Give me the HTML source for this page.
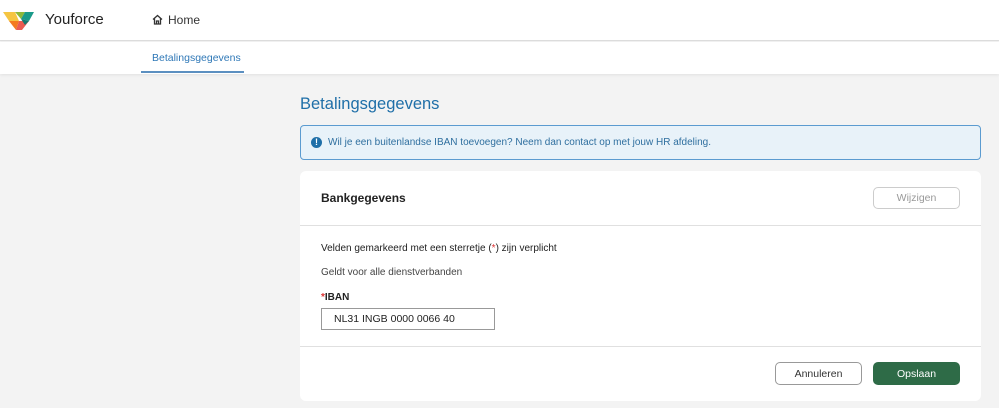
<!DOCTYPE html>
<html><head><meta charset="utf-8"><style>
*{box-sizing:border-box;margin:0;padding:0}
body{width:999px;height:408px;background:#f3f3f3;font-family:"Liberation Sans",sans-serif;position:relative;overflow:hidden;color:#222}
.abs{position:absolute}
</style></head><body>
<div class="abs" style="left:0;top:0;width:999px;height:41px;background:#fff;border-bottom:1px solid #ddd"></div>
<svg class="abs" style="left:3px;top:9px" width="32" height="24" viewBox="0 0 32 24">
<polygon points="0,3 12,3 16,12 6,12" fill="#f5c542"/>
<polygon points="12,3 22,3 18,10" fill="#8db83a"/>
<polygon points="22,3 31,3 26,12 18,10" fill="#1a9a8a"/>
<polygon points="6,12 16,12 13,21" fill="#f47a20"/>
<polygon points="16,12 26,12 19,21 13,21" fill="#ea5b52"/>
<polygon points="18,10 26,12 22,16" fill="#137a70"/>
</svg>
<div class="abs" style="left:45px;top:11px;font-size:15px;color:#222">Youforce</div>
<svg class="abs" style="left:152px;top:14px" width="11" height="11" viewBox="0 0 11 11"><path d="M1 5.5L5.5 1.5L10 5.5M2.5 4.5V10H8.5V4.5M4.5 10V7H6.5V10" fill="none" stroke="#333" stroke-width="1.3"/></svg>
<div class="abs" style="left:168px;top:13px;font-size:12px;color:#333">Home</div>
<div class="abs" style="left:0;top:42px;width:999px;height:32px;background:#fff;box-shadow:0 1px 3px rgba(0,0,0,.08)"></div>
<div class="abs" style="left:152px;top:52px;font-size:10.5px;color:#2f78b7">Betalingsgegevens</div>
<div class="abs" style="left:141px;top:71px;width:103px;height:2px;background:#5b8fc0"></div>
<div class="abs" style="left:300px;top:95px;font-size:16.5px;color:#1f6fa8">Betalingsgegevens</div>
<div class="abs" style="left:300px;top:125px;width:681px;height:35px;background:#e8f2f9;border:1px solid #5b9bd0;border-radius:4px"></div>
<div class="abs" style="left:311px;top:137px;width:11px;height:11px;border-radius:50%;background:#1f6fa8;color:#fff;font-size:9px;font-weight:bold;text-align:center;line-height:11px">!</div>
<div class="abs" style="left:328px;top:137px;font-size:10px;color:#2f6f9f">Wil je een buitenlandse IBAN toevoegen? Neem dan contact op met jouw HR afdeling.</div>
<div class="abs" style="left:300px;top:171px;width:681px;height:230px;background:#fff;border-radius:6px"></div>
<div class="abs" style="left:321px;top:191px;font-size:12px;font-weight:bold;color:#222">Bankgegevens</div>
<div class="abs" style="left:873px;top:187px;width:87px;height:22px;border:1px solid #ccc;border-radius:5px;font-size:10.5px;color:#999;text-align:center;line-height:21px">Wijzigen</div>
<div class="abs" style="left:300px;top:225px;width:681px;height:1px;background:#e0e0e0"></div>
<div class="abs" style="left:321px;top:243px;font-size:10px;color:#222">Velden gemarkeerd met een sterretje (<span style="color:#d33">*</span>) zijn verplicht</div>
<div class="abs" style="left:321px;top:267px;font-size:10px;color:#444">Geldt voor alle dienstverbanden</div>
<div class="abs" style="left:321px;top:292px;font-size:10px;font-weight:bold;color:#222"><span style="color:#d33">*</span>IBAN</div>
<div class="abs" style="left:321px;top:308px;width:174px;height:22px;border:1px solid #999;font-size:10.5px;color:#222;padding-left:12px;line-height:21px">NL31 INGB 0000 0066 40</div>
<div class="abs" style="left:300px;top:346px;width:681px;height:1px;background:#e0e0e0"></div>
<div class="abs" style="left:775px;top:362px;width:87px;height:23px;border:1px solid #999;border-radius:5px;font-size:10.5px;color:#333;text-align:center;line-height:22px;background:#fff">Annuleren</div>
<div class="abs" style="left:873px;top:362px;width:87px;height:23px;border-radius:5px;font-size:10.5px;color:#fff;text-align:center;line-height:24px;background:#2e6b47">Opslaan</div>
</body></html>
